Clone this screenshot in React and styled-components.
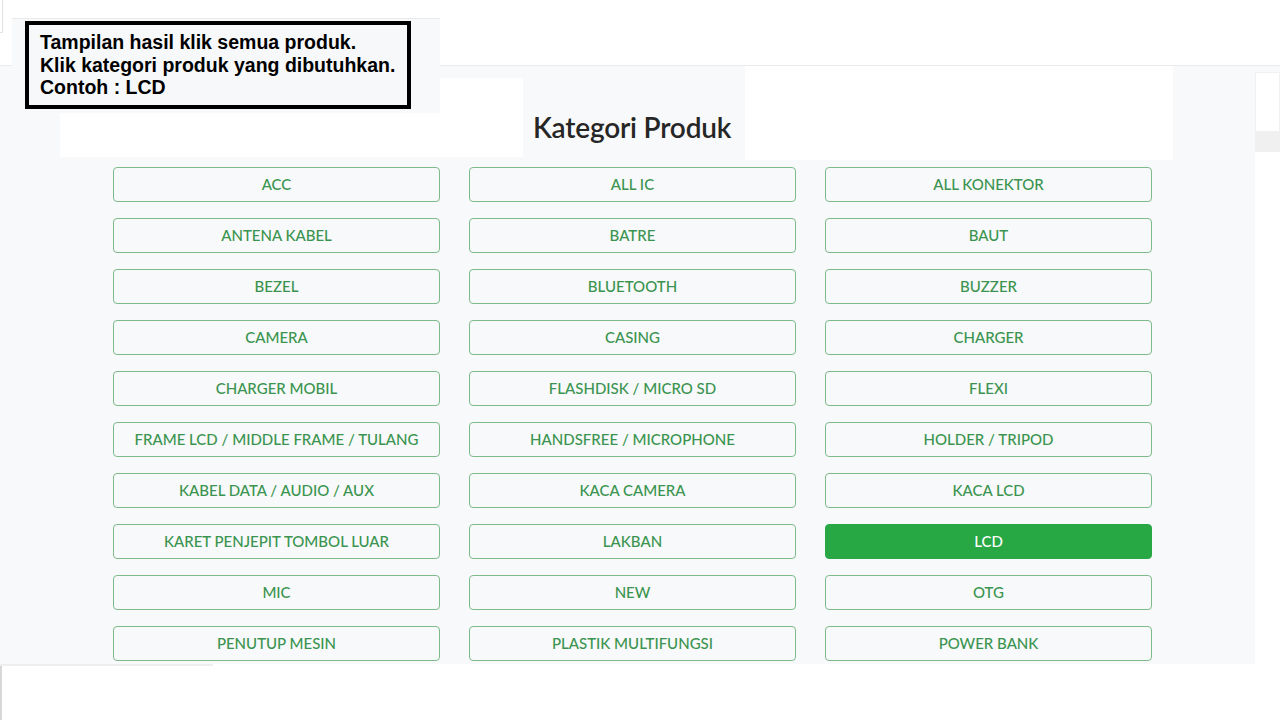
import styled, { createGlobalStyle } from "styled-components";

const GlobalStyle = createGlobalStyle`
  html, body {
    margin: 0;
    padding: 0;
    background: #ffffff;
  }
  * { box-sizing: border-box; }
`;

const categories = [
  "ACC", "ALL IC", "ALL KONEKTOR",
  "ANTENA KABEL", "BATRE", "BAUT",
  "BEZEL", "BLUETOOTH", "BUZZER",
  "CAMERA", "CASING", "CHARGER",
  "CHARGER MOBIL", "FLASHDISK / MICRO SD", "FLEXI",
  "FRAME LCD / MIDDLE FRAME / TULANG", "HANDSFREE / MICROPHONE", "HOLDER / TRIPOD",
  "KABEL DATA / AUDIO / AUX", "KACA CAMERA", "KACA LCD",
  "KARET PENJEPIT TOMBOL LUAR", "LAKBAN", "LCD",
  "MIC", "NEW", "OTG",
  "PENUTUP MESIN", "PLASTIK MULTIFUNGSI", "POWER BANK",
];

const Page = styled.div`
  position: relative;
  width: 1280px;
  height: 720px;
  overflow: hidden;
  background: #ffffff;
  font-family: Lato, "Open Sans", sans-serif;
`;

const TopBar = styled.div`
  height: 66px;
  border-bottom: 1px solid #ebebeb;
  display: flex;
`;

const EdgeMark = styled.div`
  width: 3px;
  height: 33px;
  border-right: 1px solid #e2e2e2;
  border-bottom: 1px solid #e2e2e2;
`;

const Body = styled.div`
  display: flex;
  height: 598px;
`;

const Main = styled.main`
  width: 1255px;
  background: #f8f9fa;
  display: flex;
  flex-direction: column;
`;

const TitleRow = styled.div`
  display: grid;
  grid-template-columns: 60px 463px 222px 428px 1fr;
  height: 94px;
`;

const Blank = styled.div`
  background: ${(p) => (p.white ? "#ffffff" : "transparent")};
  margin-top: ${(p) => p.top || 0}px;
  margin-bottom: ${(p) => p.bottom || 0}px;
`;

const Title = styled.h2`
  margin: 0;
  padding: 27px 0 0 10px;
  display: flex;
  align-items: center;
  font-family: Lato, "Open Sans", sans-serif;
  font-weight: 600;
  font-size: 28px;
  letter-spacing: -0.2px;
  white-space: nowrap;
  color: #262626;
`;

const Grid = styled.div`
  margin: 7px 0 0 113px;
  width: 1039px;
  display: grid;
  grid-template-columns: repeat(3, 327px);
  column-gap: 29px;
  row-gap: 16px;
`;

const CategoryButton = styled.button`
  height: 35px;
  border-radius: 4px;
  border: 1px solid ${(p) => (p.active ? "#28a745" : "#7dbb8b")};
  background: ${(p) => (p.active ? "#28a745" : "transparent")};
  color: ${(p) => (p.active ? "#ffffff" : "#3a944f")};
  font-family: Lato, "Open Sans", sans-serif;
  font-weight: 500;
  font-size: 15px;
  letter-spacing: 0;
  text-transform: uppercase;
  display: flex;
  align-items: center;
  justify-content: center;
  padding: 0 0 1px;
  cursor: pointer;
`;

const SideStrip = styled.div`
  flex: 1;
  display: flex;
  flex-direction: column;
  background: #ffffff;
`;

const SidePiece = styled.div`
  height: ${(p) => p.h}px;
  background: ${(p) => p.bg};
  border: ${(p) => (p.outline ? "1px solid #f1f1f1" : "none")};
`;

const Footer = styled.div`
  height: 56px;
  display: flex;
  flex-direction: column;
`;

const FooterShade = styled.div`
  width: 213px;
  height: 2px;
  background: #eeeeee;
`;

const FooterEdge = styled.div`
  width: 2px;
  flex: 1;
  background: #d8d8d8;
`;

const NotePanel = styled.div`
  position: absolute;
  left: 12px;
  top: 18px;
  width: 428px;
  height: 95px;
  background: #f8f9fa;
  border-top: 1px solid #ebebeb;
  padding: 2px 0 0 13px;
`;

const NoteBox = styled.div`
  width: 386px;
  height: 88px;
  border: 4px solid #000000;
  background: #f7f8fa;
  padding: 6px 0 0 11px;
  font-family: "Liberation Sans", Arial, sans-serif;
  font-weight: bold;
  font-size: 19.5px;
  line-height: 22.5px;
  color: #000000;
  white-space: nowrap;
`;

export default function App() {
  return (
    <Page>
      <GlobalStyle />
      <TopBar>
        <EdgeMark />
      </TopBar>
      <Body>
        <Main>
          <TitleRow>
            <Blank />
            <Blank white top={12} bottom={3} />
            <Title>Kategori Produk</Title>
            <Blank white />
            <Blank />
          </TitleRow>
          <Grid>
            {categories.map((name) => (
              <CategoryButton key={name} active={name === "LCD"}>
                {name}
              </CategoryButton>
            ))}
          </Grid>
        </Main>
        <SideStrip>
          <SidePiece h={6} bg="#f8f9fa" />
          <SidePiece h={60} bg="#ffffff" outline />
          <SidePiece h={20} bg="#f0f0f0" />
          <SidePiece h={488} bg="#ffffff" />
        </SideStrip>
      </Body>
      <Footer>
        <FooterShade />
        <FooterEdge />
      </Footer>
      <NotePanel>
        <NoteBox>
          Tampilan hasil klik semua produk.
          <br />
          Klik kategori produk yang dibutuhkan.
          <br />
          Contoh : LCD
        </NoteBox>
      </NotePanel>
    </Page>
  );
}
